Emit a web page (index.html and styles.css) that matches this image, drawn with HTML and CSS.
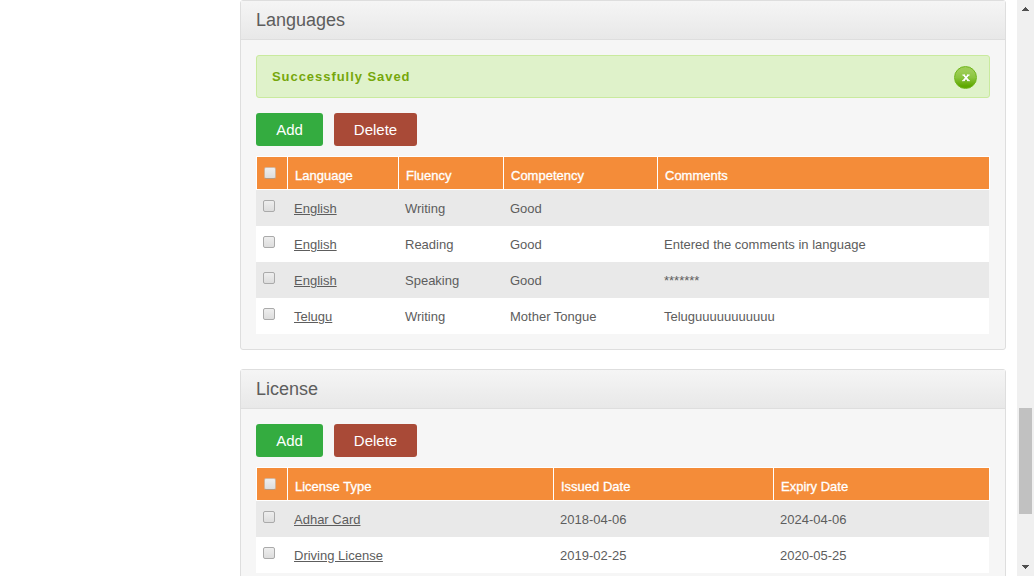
FILE: index.html
```html
<!DOCTYPE html>
<html lang="en">
<head>
<meta charset="utf-8">
<title>Languages and License</title>
<link rel="stylesheet" href="styles.css">
</head>
<body>
<div class="page">
  <main class="content">
    <section class="panel">
      <h2 class="panel-title">Languages</h2>
      <div class="panel-body">
        <div class="alert"><span>Successfully Saved</span>
          <button class="close" aria-label="Close"><svg width="8" height="8" viewBox="0 0 8 8"><path class="close-shadow" d="M1.6 2 6.4 7.6M6.4 2 1.6 7.6"/><path class="close-mark" d="M1.6 1 6.4 6.6M6.4 1 1.6 6.6"/><path class="close-serif" d="M.3 1H3M5 1H7.7M.1 6.7H2.6M5.2 6.7H7.9"/></svg></button>
        </div>
        <div class="actions"><button class="btn add">Add</button><button class="btn delete">Delete</button></div>
        <div class="table languages">
          <div class="row head"><div><i class="check"></i></div><div>Language</div><div>Fluency</div><div>Competency</div><div>Comments</div></div>
          <div class="row odd"><div><i class="check"></i></div><div><a>English</a></div><div>Writing</div><div>Good</div><div></div></div>
          <div class="row"><div><i class="check"></i></div><div><a>English</a></div><div>Reading</div><div>Good</div><div>Entered the comments in language</div></div>
          <div class="row odd"><div><i class="check"></i></div><div><a>English</a></div><div>Speaking</div><div>Good</div><div>*******</div></div>
          <div class="row"><div><i class="check"></i></div><div><a>Telugu</a></div><div>Writing</div><div>Mother Tongue</div><div>Teluguuuuuuuuuuu</div></div>
        </div>
      </div>
    </section>
    <section class="panel">
      <h2 class="panel-title">License</h2>
      <div class="panel-body">
        <div class="actions"><button class="btn add">Add</button><button class="btn delete">Delete</button></div>
        <div class="table licenses">
          <div class="row head"><div><i class="check"></i></div><div>License Type</div><div>Issued Date</div><div>Expiry Date</div></div>
          <div class="row odd"><div><i class="check"></i></div><div><a>Adhar Card</a></div><div>2018-04-06</div><div>2024-04-06</div></div>
          <div class="row"><div><i class="check"></i></div><div><a>Driving License</a></div><div>2019-02-25</div><div>2020-05-25</div></div>
        </div>
      </div>
    </section>
  </main>
  <div class="scrollbar">
    <svg class="arrow" width="17" height="17" viewBox="0 0 17 17" shape-rendering="crispEdges"><path d="M8 7h1v1h1v1h1v1h1v1H5v-1h1V9h1V8h1z"/></svg>
    <div class="thumb"></div>
    <svg class="arrow" width="17" height="17" viewBox="0 0 17 17" shape-rendering="crispEdges"><path d="M5 6h7v1h-1v1h-1v1H9v1H8V9H7V8H6V7H5z"/></svg>
  </div>
</div>
</body>
</html>
```
FILE: styles.css
```css
* { box-sizing: border-box; }
body {
  margin: 0;
  overflow: hidden;
  background: #fff;
  color: #5d5d5d;
  font: 13px/18px "Liberation Sans", Arial, sans-serif;
}
.page { display: flex; height: 576px; overflow: hidden; }
.content { width: 766px; margin-left: 240px; }
.panel {
  margin-bottom: 19px;
  border: 1px solid #dedede;
  border-radius: 3px;
  background: #f6f6f6;
}
.panel-title {
  height: 39px;
  margin: 0;
  padding-left: 15px;
  border-bottom: 1px solid #dedede;
  background: linear-gradient(#f5f5f5, #e8e8e8);
  font-size: 18px;
  font-weight: 400;
  line-height: 39px;
}
.panel-body { padding: 15px; }
.alert {
  display: flex;
  align-items: center;
  justify-content: space-between;
  height: 43px;
  margin-bottom: 15px;
  padding: 0 12px 0 15px;
  border: 1px solid #c9ea9e;
  border-radius: 3px;
  background: #dff2ca;
  color: #76a70b;
  font-weight: 700;
  letter-spacing: .95px;
}
.close {
  display: flex;
  align-items: center;
  justify-content: center;
  width: 23px;
  height: 23px;
  margin-top: 2px;
  padding: 0;
  border: 1px solid #6fb51a;
  border-radius: 50%;
  background: linear-gradient(#9ccc55 20%, #8bc53f 50%, #5ea800 90%);
}
.close svg { fill: none; overflow: visible; }
.close-mark { stroke: #fff; stroke-width: 1.9; }
.close-serif { stroke: #fff; stroke-width: 1; }
.close-shadow { stroke: #5b9b12; stroke-width: 1.5; }
.actions { display: flex; gap: 11px; margin-bottom: 10px; }
.btn {
  height: 33px;
  padding: 0;
  border: 0;
  border-radius: 3px;
  color: #fff;
  font: 15px "Liberation Sans", Arial, sans-serif;
}
.add { width: 67px; background: #34ac40; }
.delete { width: 83px; background: #a94a37; }
.table { width: 734px; }
.row {
  display: grid;
  width: 733px;
  height: 36px;
  background: #fff;
  line-height: 37px;
}
.languages .row { grid-template-columns: 31px 111px 105px 154px 1fr; }
.licenses .row { grid-template-columns: 31px 266px 220px 1fr; }
.row > div { padding-left: 7px; white-space: nowrap; }
.row.odd { background: #e9e9e9; }
.row.head {
  width: 734px;
  height: 34px;
  padding: 1px 1px 1px 0;
  color: #fff;
  line-height: 37px;
  -webkit-text-stroke: .3px #fff;
}
.row.head > div {
  height: 32px;
  border-left: 1px solid #fff;
  background: #f48c39;
}
a { text-decoration: underline; }
.check {
  display: block;
  width: 12px;
  height: 12px;
  margin-top: 10px;
  border: 1px solid #aaa;
  border-radius: 2px;
  background: linear-gradient(#eee, #ddd);
}
.head .check { border-color: #d6b79d #d2b398 #b89a80; }
.scrollbar {
  display: flex;
  flex-direction: column;
  width: 17px;
  height: 576px;
  margin-left: auto;
  background: #f0f0f0;
}
.arrow { display: block; fill: #505050; }
.thumb { width: 13px; height: 106px; margin: 391px 2px 45px; background: #c1c1c1; }
```
